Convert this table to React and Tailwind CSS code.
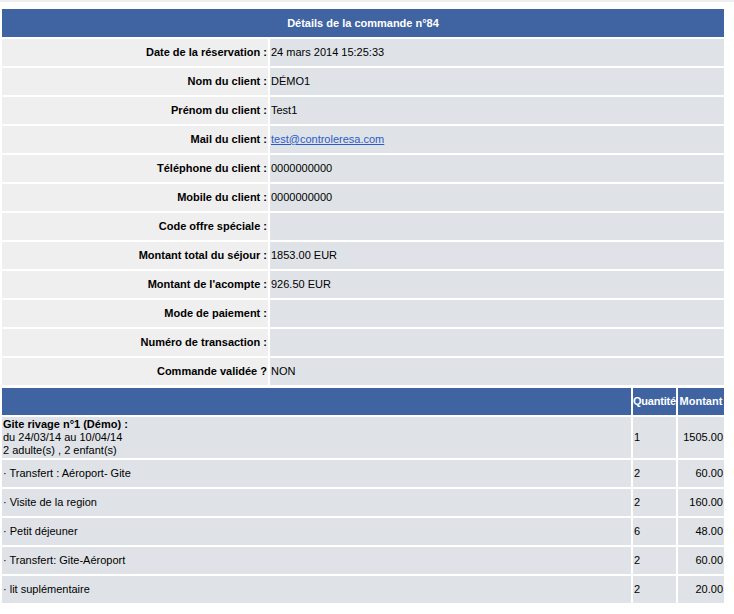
import React from "react";

const details = [
  { label: "Date de la réservation :", value: "24 mars 2014 15:25:33" },
  { label: "Nom du client :", value: "DÉMO1" },
  { label: "Prénom du client :", value: "Test1" },
  { label: "Mail du client :", value: "test@controleresa.com", link: true },
  { label: "Téléphone du client :", value: "0000000000" },
  { label: "Mobile du client :", value: "0000000000" },
  { label: "Code offre spéciale :", value: "" },
  { label: "Montant total du séjour :", value: "1853.00 EUR" },
  { label: "Montant de l'acompte :", value: "926.50 EUR" },
  { label: "Mode de paiement :", value: "" },
  { label: "Numéro de transaction :", value: "" },
  { label: "Commande validée ?", value: "NON" },
];

const options = [
  { name: "Transfert : Aéroport- Gite", qty: "2", amount: "60.00" },
  { name: "Visite de la region", qty: "2", amount: "160.00" },
  { name: "Petit déjeuner", qty: "6", amount: "48.00" },
  { name: "Transfert: Gite-Aéroport", qty: "2", amount: "60.00" },
  { name: "lit suplémentaire", qty: "2", amount: "20.00" },
];

export default function App() {
  return (
    <div className="w-[734px] h-[614px] bg-white text-[11px] leading-[13px] text-black font-['Liberation_Sans',Arial,sans-serif]">
      <div className="h-[2px] bg-[#eeeeee]"></div>
      <div className="pt-[5px]">
        {/* détails de la commande */}
        <table className="w-[726px] border-separate border-spacing-[2px]">
          <thead>
            <tr>
              <th colSpan={2} className="h-[28px] bg-[#4063a2] text-white font-bold text-center p-0">
                Détails de la commande n°84
              </th>
            </tr>
          </thead>
          <tbody>
            {details.map((d, i) => (
              <tr key={i}>
                <td className="w-[266px] h-[27px] bg-[#efefef] text-right font-bold p-0 pr-[1px] align-middle">
                  {d.label}
                </td>
                <td className="h-[27px] bg-[#dfe3e7] p-0 pl-[1px] align-middle">
                  {d.link ? (
                    <a href="#" className="text-[#2a5cc8] underline">{d.value}</a>
                  ) : (
                    d.value
                  )}
                </td>
              </tr>
            ))}
          </tbody>
        </table>

        {/* lignes */}
        <table className="w-[726px] border-separate border-spacing-[2px] -mt-[1px]">
          <thead>
            <tr>
              <th className="h-[27px] bg-[#4063a2] p-0"></th>
              <th className="w-[43px] h-[27px] bg-[#4063a2] text-white font-bold p-0 whitespace-nowrap tracking-[-0.2px]">Quantité</th>
              <th className="w-[46px] h-[27px] bg-[#4063a2] text-white font-bold p-0 whitespace-nowrap">Montant</th>
            </tr>
          </thead>
          <tbody>
            <tr>
              <td className="h-[41px] bg-[#dfe3e7] p-0 pl-[1px] align-middle">
                <div className="font-bold">Gite rivage n°1 (Démo) :</div>
                <div>du 24/03/14 au 10/04/14</div>
                <div>2 adulte(s) , 2 enfant(s)</div>
              </td>
              <td className="bg-[#dfe3e7] p-0 pl-[1px] align-middle">1</td>
              <td className="bg-[#dfe3e7] p-0 pr-[1px] text-right align-middle">1505.00</td>
            </tr>
            {options.map((o, i) => (
              <tr key={i}>
                <td className="h-[27px] bg-[#dfe3e7] p-0 pl-[1px] align-middle">· {o.name}</td>
                <td className="bg-[#dfe3e7] p-0 pl-[1px] align-middle">{o.qty}</td>
                <td className="bg-[#dfe3e7] p-0 pr-[1px] text-right align-middle">{o.amount}</td>
              </tr>
            ))}
          </tbody>
        </table>
      </div>
    </div>
  );
}
